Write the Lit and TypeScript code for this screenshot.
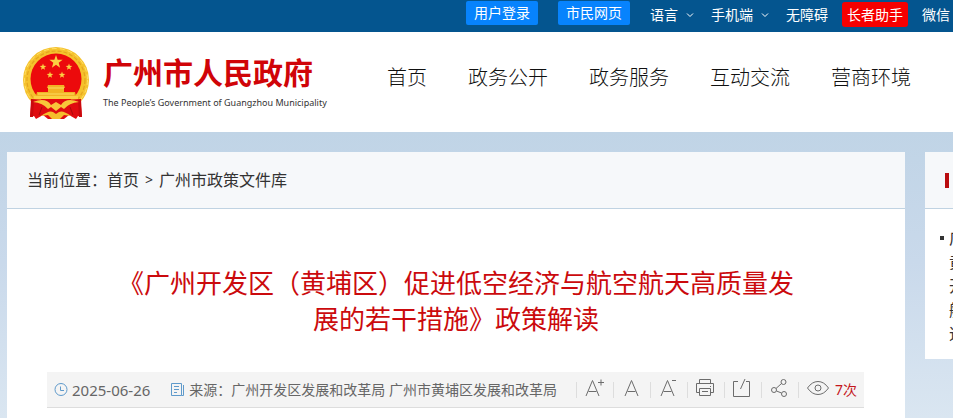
import { LitElement, html, svg, css } from "lit";
import { customElement } from "lit/decorators.js";

const starPoints = (cx: number, cy: number, r: number): string =>
  Array.from({ length: 10 }, (_, i) => {
    const a = (Math.PI / 5) * i - Math.PI / 2;
    const d = i % 2 ? r * 0.4 : r;
    return `${(cx + d * Math.cos(a)).toFixed(2)},${(cy + d * Math.sin(a)).toFixed(2)}`;
  }).join(" ");

const emblemStars: [number, number, number][] = [
  [34, 16, 7],
  [21, 21, 3.5],
  [47, 21, 3.5],
  [28, 29, 3.5],
  [40, 29, 3.5],
];

const emblem = html`<svg class="emblem" viewBox="0 0 68 74" role="img" aria-label="国徽">
  <circle cx="34" cy="34" r="33" fill="#f5c22c" />
  <circle cx="34" cy="34" r="29" fill="none" stroke="#e5a520" stroke-width="1.2" stroke-dasharray="4 2" />
  <circle cx="34" cy="34" r="31.5" fill="none" stroke="#ffdf68" stroke-width="1" stroke-dasharray="5 3" />
  <circle cx="34" cy="33" r="25.5" fill="#ec0a0c" />
  ${emblemStars.map(([x, y, r]) => svg`<polygon points=${starPoints(x, y, r)} fill="#fbd043" />`)}
  <path d="M26 39h16l1 3h-1v4h11l1 4H14l1-4h11v-4h-1z" fill="#f2b324" />
  <path d="M26 42h16M16 48h36" stroke="#fbdc61" stroke-width="1" />
  <path d="M12 50h44v3H12z" fill="#fbd043" />
  <path d="M9 53Q22 54 34 54T59 53L60 71 56 70 54 73 47 69 42 73H26L21 69 14 73 12 70 8 71z" fill="#e00b10" />
  <path d="M9 53L12 54 11 71 8 71 9 60zM59 53L56 54 57 71 60 71 59 60z" fill="#c9090d" />
  <path d="M11 56Q24 51 29 59L34 56 39 59Q44 51 57 56Q47 57 42 63L39 61 34 65 29 61 26 63Q21 57 11 56z" fill="#f8c63a" />
  <path d="M19 70Q27 64 31 66L34 68 37 66Q41 64 49 70L42 69 38 73H30L26 69z" fill="#f5bd2c" />
  <path d="M20 61l-3 8M48 61l3 8" fill="none" stroke="#a90a0c" stroke-width="1" />
</svg>`;

const chevron = html`<svg class="chevron" viewBox="0 0 8 8" aria-hidden="true"><path d="M1 2.5l3 3 3-3" /></svg>`;

const icons = {
  clock: html`<svg class="ico blue small" viewBox="0 0 14 14" aria-hidden="true"><circle cx="7" cy="6.5" r="6" /><path d="M6.5 3.500v4H10" /></svg>`,
  paper: html`<svg class="ico blue small" viewBox="0 0 14 14" aria-hidden="true"><path d="M.5.5h10v12H.5zM12.500 2v10.500h-2M3 3.500h5M3 6.500h5M3 9.500h3" /></svg>`,
  larger: html`<svg class="ico" viewBox="0 2 20 20" aria-hidden="true"><path d="M1 18L7.5 2.500 14 18M3.500 13.500h8M13 4.500h6M16 1.500v6" /></svg>`,
  normal: html`<svg class="ico" viewBox="0 2 20 20" aria-hidden="true"><path d="M3 18L9.500 2.500 16 18M5.500 13.500h8" /></svg>`,
  smaller: html`<svg class="ico" viewBox="0 2 20 20" aria-hidden="true"><path d="M2 18L8.500 2.500 15 18M4.500 13.500h8M13 2.500h4" /></svg>`,
  print: html`<svg class="ico" viewBox="1 2 20 20" aria-hidden="true"><path d="M4.500 5.500v-4h11v4M4.500 14.500h-3v-9h17v9h-3M4.500 10.500h11v7h-11zM7 13.500h6M15 8.500h1" /></svg>`,
  open: html`<svg class="ico" viewBox="1 2 20 20" aria-hidden="true"><path d="M6 3.500H1.500v15h16v-15H14M8.500 11L13 1" /></svg>`,
  share: html`<svg class="ico" viewBox="0 2 20 20" aria-hidden="true"><circle cx="13.500" cy="4" r="2.500" /><circle cx="4" cy="12" r="2.500" /><circle cx="14" cy="16" r="2.500" /><path d="M6 10.500L11.500 5.500M6.500 13L11.500 15" /></svg>`,
  eye: html`<svg class="ico eye" viewBox="1 2 24 20" aria-hidden="true"><path d="M1.500 10Q6 3.500 12 3.500T22.500 10Q18 16.500 12 16.500T1.500 10z" /><circle cx="12" cy="10" r="3" /></svg>`,
};

const tools = [
  { label: "放大字体", icon: icons.larger },
  { label: "默认字体", icon: icons.normal },
  { label: "缩小字体", icon: icons.smaller },
  { label: "打印", icon: icons.print },
  { label: "打开", icon: icons.open },
  { label: "分享", icon: icons.share },
];

const navItems = ["首页", "政务公开", "政务服务", "互动交流", "营商环境"];

@customElement("app-root")
export class AppRoot extends LitElement {
  static styles = css`
    :host {
      display: block;
      overflow: hidden;
      min-height: 100vh;
      color: #333;
      font: 16px/24px "Noto Sans", "Noto Sans CJK SC", sans-serif;
      background: #fff;
    }
    * {
      box-sizing: border-box;
    }
    a {
      color: inherit;
      text-decoration: none;
      white-space: nowrap;
    }
    button {
      border: 0;
      padding: 0;
      margin: 0;
      background: none;
      color: inherit;
      font: inherit;
      white-space: nowrap;
    }
    svg {
      display: block;
      flex: none;
      overflow: visible;
    }
    .topbar {
      display: flex;
      justify-content: flex-end;
      height: 32px;
      padding-right: 3px;
      background: #04558f;
      color: #fff;
      font-size: 14px;
      line-height: 24px;
    }
    .accounts {
      display: flex;
      gap: 20px;
      padding-top: 1px;
      margin-right: 20px;
    }
    .account {
      width: 72px;
      height: 24px;
      border-radius: 2px;
      background: #0783fd;
      text-align: center;
    }
    .links {
      display: flex;
      align-items: flex-start;
      padding-top: 2px;
    }
    .menu {
      display: flex;
      align-items: center;
      gap: 8px;
      height: 25px;
      margin-right: 17px;
    }
    .chevron {
      width: 8px;
      height: 8px;
      fill: none;
      stroke: #fff;
    }
    .plain {
      line-height: 26px;
    }
    .elder {
      padding: 0 5px;
      margin: 0 14px;
      line-height: 25px;
      border-radius: 3px;
      background: #f60000;
    }
    .header {
      display: flex;
      align-items: center;
      height: 100px;
      padding: 2px 0 0 22px;
    }
    .brand {
      display: flex;
      align-items: center;
      gap: 13px;
      flex: none;
      width: 365px;
    }
    .emblem {
      width: 68px;
      height: 74px;
    }
    .name {
      color: #d00408;
      font-size: 30px;
      line-height: 40px;
      font-weight: 700;
    }
    .english {
      color: #333;
      font: 9px/20px "Noto Sans", sans-serif;
    }
    .nav {
      display: flex;
      gap: 41px;
      padding-bottom: 10px;
      color: #111;
      font-size: 20px;
      font-weight: 300;
      line-height: 30px;
    }
    .page {
      display: grid;
      grid-template-columns: minmax(0, 1fr) 28px;
      gap: 20px;
      align-items: start;
      min-height: calc(100vh - 132px);
      padding: 20px 0 0 7px;
      background: linear-gradient(#c0d4e6, #c9d9eb 130px, #dae6f1 286px);
    }
    .article {
      min-height: calc(100vh - 152px);
      background: #fff;
    }
    .crumbs,
    .side-head {
      display: flex;
      align-items: center;
      height: 57px;
      padding-left: 20px;
      background: #f6f8fa;
      border-bottom: 1px solid #c0d3e2;
    }
    .sep {
      margin: 0 6px;
      font-size: 14px;
    }
    .title {
      margin: 0;
      padding: 56px 104px 35px;
      color: #cb0a0d;
      font-size: 26px;
      line-height: 36px;
      font-weight: 400;
      text-align: center;
    }
    .meta {
      display: flex;
      align-items: center;
      height: 36px;
      margin: 0 41px 0 40px;
      padding: 0 7px;
      background: #f4f4f4;
      border-bottom: 1px solid #ddd;
      color: #666;
      font-size: 14px;
    }
    .date,
    .source,
    .views {
      display: flex;
      align-items: center;
      gap: 4px;
      white-space: nowrap;
    }
    .date {
      margin-right: 21px;
      font-size: 15px;
    }
    .tools {
      display: flex;
      align-items: center;
      margin-left: auto;
    }
    .tool,
    .views {
      padding-left: 8px;
      border-left: 1px solid #ddd;
      height: 16px;
    }
    .tool {
      display: flex;
      align-items: center;
      width: 37px;
    }
    .ico {
      width: 20px;
      height: 20px;
      fill: none;
      stroke: #6c6c6c;
    }
    .small {
      width: 14px;
      height: 14px;
    }
    .eye {
      width: 24px;
    }
    .blue {
      stroke: #5f9acb;
    }
    .views {
      color: #c4161c;
    }
    .side {
      height: 207px;
      overflow: hidden;
      background: #fff;
    }
    .mark {
      width: 4px;
      height: 15px;
      background: #b90c0f;
    }
    .related {
      display: grid;
      grid-template-columns: 4px 16px;
      gap: 5px;
      margin: 0;
      padding: 17px 0 0 15px;
      list-style: none;
    }
    .bullet {
      width: 4px;
      height: 4px;
      margin-top: 10px;
      background: #333;
    }
    .related-link {
      white-space: normal;
      word-break: break-all;
    }
  `;

  render() {
    return html`
      <div class="topbar">
        <div class="accounts">
          <button class="account">用户登录</button>
          <button class="account">市民网页</button>
        </div>
        <div class="links">
          <button class="menu">语言 ${chevron}</button>
          <button class="menu">手机端 ${chevron}</button>
          <a class="plain" href="#">无障碍</a>
          <a class="elder" href="#">长者助手</a>
          <a class="plain" href="#">微信</a>
        </div>
      </div>
      <header class="header">
        <a class="brand" href="#">
          ${emblem}
          <div>
            <div class="name">广州市人民政府</div>
            <div class="english">The People’s Government of Guangzhou Municipality</div>
          </div>
        </a>
        <nav class="nav">${navItems.map((n) => html`<a href="#">${n}</a>`)}</nav>
      </header>
      <div class="page">
        <main class="article">
          <nav class="crumbs" aria-label="当前位置">
            <span>当前位置：</span><a href="#">首页</a><span class="sep">&gt;</span><a href="#">广州市政策文件库</a>
          </nav>
          <h1 class="title">《广州开发区（黄埔区）促进低空经济与航空航天高质量发展的若干措施》政策解读</h1>
          <div class="meta">
            <span class="date">${icons.clock}2025-06-26</span>
            <span class="source">${icons.paper}来源：广州开发区发展和改革局 广州市黄埔区发展和改革局</span>
            <div class="tools">
              ${tools.map((t) => html`<button class="tool" aria-label=${t.label}>${t.icon}</button>`)}
              <span class="views">${icons.eye}7次</span>
            </div>
          </div>
        </main>
        <aside class="side">
          <div class="side-head"><span class="mark"></span></div>
          <ul class="related">
            <li class="bullet"></li>
            <li><a class="related-link" href="#">广黄开航道</a></li>
          </ul>
        </aside>
      </div>
    `;
  }
}
